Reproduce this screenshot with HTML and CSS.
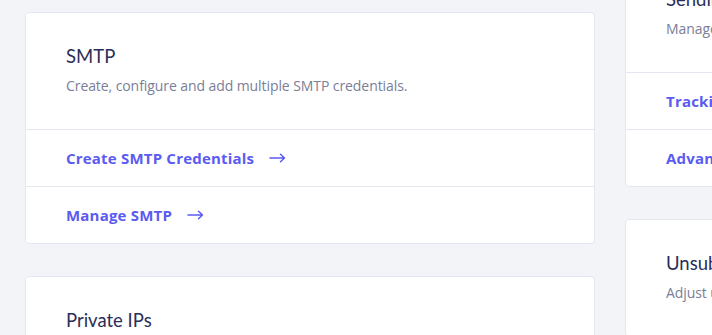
FILE: index.html
```html
<!DOCTYPE html>
<html>
<head>
<meta charset="utf-8">
<link rel="stylesheet" href="styles.css">
</head>
<body>
<div class="page">
  <div class="col col-left">
    <section class="card">
      <div class="card-head">
        <h2 class="card-title">SMTP</h2>
        <p class="card-desc">Create, configure and add multiple SMTP credentials.</p>
      </div>
      <a class="card-link" href="#">Create SMTP Credentials <svg class="arrow" width="17" height="10" viewBox="0 0 17 10"><path d="M1 5H15.5M11.5 1.2L15.5 5L11.5 8.8" fill="none" stroke="currentColor" stroke-width="1.5" stroke-linecap="round" stroke-linejoin="round"/></svg></a>
      <a class="card-link" href="#">Manage SMTP <svg class="arrow" width="17" height="10" viewBox="0 0 17 10"><path d="M1 5H15.5M11.5 1.2L15.5 5L11.5 8.8" fill="none" stroke="currentColor" stroke-width="1.5" stroke-linecap="round" stroke-linejoin="round"/></svg></a>
    </section>
    <section class="card">
      <div class="card-head">
        <h2 class="card-title">Private IPs</h2>
        <p class="card-desc">Manage your dedicated IP addresses.</p>
      </div>
    </section>
  </div>
  <div class="col col-right">
    <section class="card">
      <div class="card-head">
        <h2 class="card-title">Sending Settings</h2>
        <p class="card-desc">Manage your sending domains and settings.</p>
      </div>
      <a class="card-link" href="#">Tracking Settings <svg class="arrow" width="17" height="10" viewBox="0 0 17 10"><path d="M1 5H15.5M11.5 1.2L15.5 5L11.5 8.8" fill="none" stroke="currentColor" stroke-width="1.5" stroke-linecap="round" stroke-linejoin="round"/></svg></a>
      <a class="card-link" href="#">Advanced Settings <svg class="arrow" width="17" height="10" viewBox="0 0 17 10"><path d="M1 5H15.5M11.5 1.2L15.5 5L11.5 8.8" fill="none" stroke="currentColor" stroke-width="1.5" stroke-linecap="round" stroke-linejoin="round"/></svg></a>
    </section>
    <section class="card">
      <div class="card-head">
        <h2 class="card-title">Unsubscribe Settings</h2>
        <p class="card-desc">Adjust unsubscribe link settings.</p>
      </div>
    </section>
  </div>
</div>
</body>
</html>
```
FILE: styles.css
```css
html, body {
  margin: 0;
  padding: 0;
  background: #f3f4f8;
  font-family: "Open Sans", "Noto Sans", sans-serif;
  overflow: hidden;
}
.page {
  display: flex;
  gap: 30px;
  padding-left: 25px;
  align-items: flex-start;
}
.col {
  display: flex;
  flex-direction: column;
  gap: 32px;
  flex: 0 0 570px;
}
.col-left { padding-top: 12px; }
.col-right { margin-top: -45px; }
.card {
  background: #fff;
  border: 1px solid #e4e7ef;
  border-radius: 4px;
  display: flex;
  flex-direction: column;
  min-height: 100px;
}
.card-head {
  padding: 31px 40px 0;
  height: 116px;
  box-sizing: border-box;
}
.card-title {
  margin: 0;
  font-family: "Lato", sans-serif;
  font-size: 18.5px;
  font-weight: 400;
  color: #2b2e58;
  line-height: 24px;
}
.card-desc {
  margin: 9px 0 0;
  font-size: 14px;
  letter-spacing: -0.08px;
  color: #7a7e97;
  line-height: 18px;
}
.card-link {
  display: flex;
  align-items: center;
  gap: 15px;
  height: 56px;
  border-top: 1px solid #e4e7ef;
  padding: 0 40px;
  font-size: 15px;
  letter-spacing: 0.2px;
  font-weight: 700;
  color: #5b5bf2;
  text-decoration: none;
}
.arrow { display: block; }
```
